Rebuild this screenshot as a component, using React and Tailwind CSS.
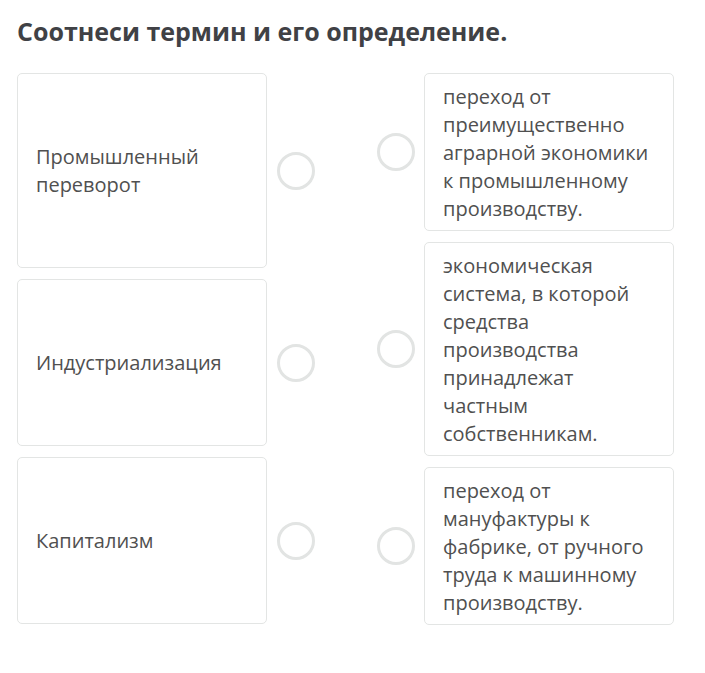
const terms = [
  { text: 'Промышленный переворот', h: 'h-[195px]' },
  { text: 'Индустриализация', h: 'h-[167px]' },
  { text: 'Капитализм', h: 'h-[167px]' },
];

const definitions = [
  'переход от преимущественно аграрной экономики к промышленному производству.',
  'экономическая система, в которой средства производства принадлежат частным собственникам.',
  'переход от мануфактуры к фабрике, от ручного труда к машинному производству.',
];

const Dot = () => (
  <div className="w-[38px] h-[38px] shrink-0 rounded-full border-[3px] border-[#e2e4e3] bg-white" />
);

export default function App() {
  return (
    <div className="min-h-screen bg-white px-[17px] pt-[14px] font-['Open_Sans',sans-serif] text-[#505050]">
      <h1 className="text-[25px] leading-[34px] font-bold text-[#404145]">
        Соотнеси термин и его определение.
      </h1>

      <div className="mt-[25px] flex items-start">
        <div className="flex flex-col gap-[11px]">
          {terms.map(t => (
            <div key={t.text} className="flex items-center gap-[10px]">
              <div
                className={`w-[250px] ${t.h} flex items-center rounded-[5px] border border-[#e3e5e4] px-[18px] text-[20px] leading-[28px]`}
              >
                {t.text}
              </div>
              <Dot />
            </div>
          ))}
        </div>

        <div className="ml-[62px] flex flex-col gap-[11px]">
          {definitions.map(d => (
            <div key={d} className="flex items-center gap-[9px]">
              <Dot />
              <div className="w-[250px] rounded-[5px] border border-[#e3e5e4] pl-[18px] pr-[16px] pt-[9px] pb-[7px] text-[20px] leading-[28px]">
                {d}
              </div>
            </div>
          ))}
        </div>
      </div>
    </div>
  );
}
